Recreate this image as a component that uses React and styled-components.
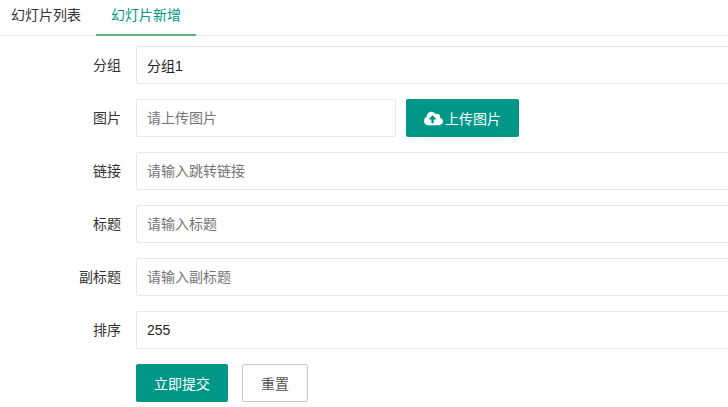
import styled, { createGlobalStyle } from "styled-components";
import { FaCloudUploadAlt } from "react-icons/fa";

const GlobalStyle = createGlobalStyle`
    html, body {
        margin: 0;
        padding: 0;
        background: #fff;
        overflow: hidden;
    }
    body {
        font-family: "Liberation Sans", "Noto Sans CJK SC", sans-serif;
        font-size: 14px;
        color: #333;
    }
`;

const TabBar = styled.ul`
    display: flex;
    gap: 5px;
    height: 35px;
    margin: 0;
    padding: 0 0 0 1px;
    list-style: none;
    border-bottom: 1px solid #e6e6e6;
`;

const Tab = styled.li`
    box-sizing: border-box;
    height: 36px;
    padding: 0 ${props => props.$active ? "15px" : "10px"};
    text-align: center;
    line-height: 30px;
    font-size: 14px;
    color: ${props => props.$active ? "#009688" : "#333"};
    border-bottom: ${props => props.$active ? "2px solid #5fb878" : "none"};
`;

const Form = styled.form`
    display: flex;
    flex-direction: column;
    gap: 15px;
    padding-top: 10px;
`;

const Row = styled.div`
    display: flex;
    align-items: center;
    height: 38px;
`;

const Label = styled.label`
    box-sizing: border-box;
    flex: none;
    width: 136px;
    padding: 0 15px 2px 0;
    text-align: right;
    color: #333;
`;

const Input = styled.input`
    box-sizing: border-box;
    width: ${props => props.$width || "600px"};
    flex: none;
    height: 38px;
    padding: 0 10px 1px;
    border: 1px solid #e6e6e6;
    border-radius: 2px;
    background: #fff;
    font: inherit;
    color: #222;
    outline: none;
    &::placeholder {
        color: #757575;
        opacity: 1;
    }
`;

const Button = styled.button`
    box-sizing: border-box;
    display: inline-flex;
    align-items: center;
    justify-content: center;
    height: 38px;
    padding: 0 18px;
    border: ${props => props.$plain ? "1px solid #c9c9c9" : "none"};
    border-radius: 2px;
    background: ${props => props.$plain ? "#fff" : "#009688"};
    color: ${props => props.$plain ? "#555" : "#fff"};
    font: inherit;
    white-space: nowrap;
`;

const UploadButton = styled(Button)`
    margin-left: 10px;
    gap: 2px;
`;

const ResetButton = styled(Button)`
    margin-left: 14px;
`;

const LabelGap = styled.div`
    width: 136px;
    flex: none;
`;

const fields = [
    { label: "链接", placeholder: "请输入跳转链接" },
    { label: "标题", placeholder: "请输入标题" },
    { label: "副标题", placeholder: "请输入副标题" },
];

export default function App() {
    return (
        <>
            <GlobalStyle />
            <TabBar>
                <Tab>幻灯片列表</Tab>
                <Tab $active>幻灯片新增</Tab>
            </TabBar>
            <Form>
                <Row>
                    <Label>分组</Label>
                    <Input defaultValue="分组1" />
                </Row>
                <Row>
                    <Label>图片</Label>
                    <Input $width="260px" placeholder="请上传图片" />
                    <UploadButton type="button">
                        <FaCloudUploadAlt size={19} />
                        上传图片
                    </UploadButton>
                </Row>
                {fields.map(field => (
                    <Row key={field.label}>
                        <Label>{field.label}</Label>
                        <Input placeholder={field.placeholder} />
                    </Row>
                ))}
                <Row>
                    <Label>排序</Label>
                    <Input defaultValue="255" />
                </Row>
                <Row>
                    <LabelGap />
                    <Button type="button">立即提交</Button>
                    <ResetButton type="button" $plain>重置</ResetButton>
                </Row>
            </Form>
        </>
    );
}
